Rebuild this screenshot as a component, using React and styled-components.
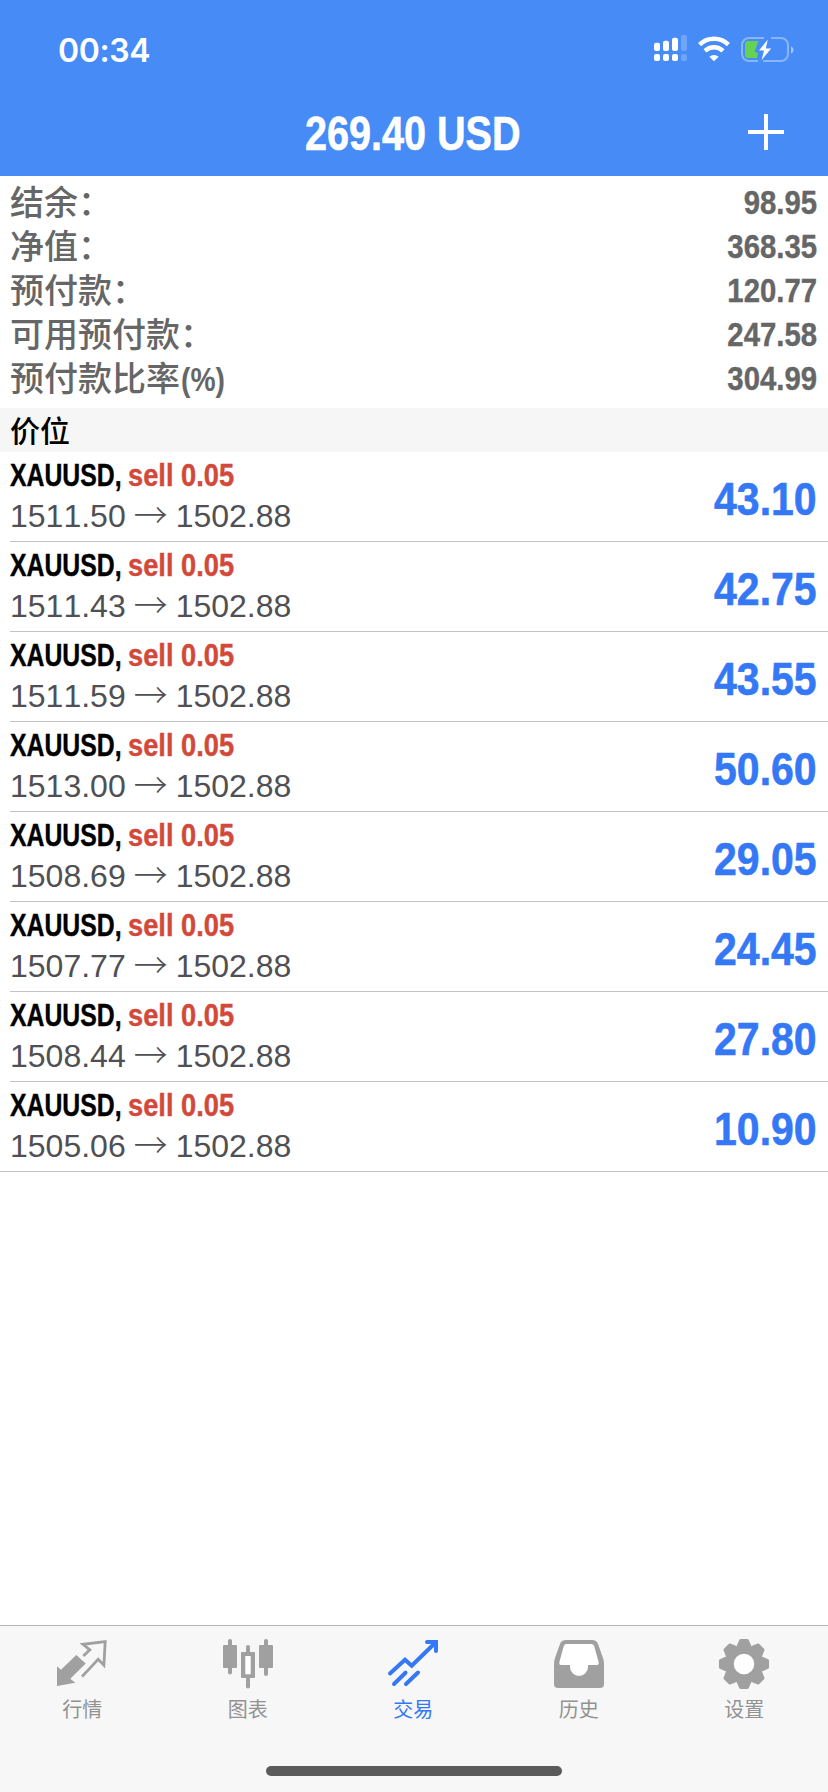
import React from "react";
import styled, { createGlobalStyle } from "styled-components";

const GlobalStyle = createGlobalStyle`
  * {
    box-sizing: border-box;
  }

  body {
    margin: 0;
    background-color: #fff;
    font-family: "Liberation Sans", "Noto Sans CJK SC", sans-serif;
    font-kerning: none;
  }

  svg {
    display: block;
    overflow: visible;
  }
`;

const Screen = styled.div`
  display: flex;
  flex-direction: column;
  width: 828px;
  height: 1792px;
  overflow: hidden;
  background-color: #fff;
`;

const Header = styled.header`
  height: 176px;
  background-color: #478bf6;
  color: #fff;
`;

const StatusBar = styled.div`
  display: flex;
  justify-content: space-between;
  height: 88px;
  padding: 30px 34px 0 58px;
`;

const Clock = styled.div`
  font-family: "Inter", sans-serif;
  font-size: 32px;
  font-weight: 600;
  line-height: 41px;
  letter-spacing: -0.4px;
`;

const StatusIcons = styled.div`
  display: flex;
  gap: 11px;
  padding-top: 5px;
`;

const NavBar = styled.div`
  display: grid;
  grid-template-columns: 1fr auto 1fr;
  align-items: center;
  height: 88px;
  padding: 2px 44px 0 41px;
`;

const Title = styled.h1`
  grid-column: 2;
  margin: 0;
  font-size: 48px;
  line-height: 88px;
  transform: scaleX(0.825);
  -webkit-text-stroke: 0.6px;
`;

const AddButton = styled.button`
  justify-self: end;
  margin-top: -4px;
  padding: 0;
  border: none;
  background: none;
  color: #fff;
`;

const Summary = styled.section`
  height: 232px;
  padding: 4px 11px 0 10px;
  color: #666;
  font-size: 34px;
`;

const SummaryRow = styled.div`
  display: flex;
  justify-content: space-between;
  height: 44px;
  line-height: 44px;
`;

const SummaryLabel = styled.div`
  font-weight: 500;
  line-height: 46px;
  white-space: nowrap;
`;

const Unit = styled.span`
  display: inline-block;
  margin-left: 1px;
  font-weight: bold;
  transform: scaleX(0.83);
  transform-origin: left;
`;

const SummaryValue = styled.div`
  font-weight: bold;
  transform: scaleX(0.862);
  transform-origin: right;
  -webkit-text-stroke: 0.4px;
`;

const SectionTitle = styled.div`
  height: 44px;
  padding-left: 10px;
  background-color: #f6f6f6;
  color: #000;
  font-size: 30px;
  font-weight: 500;
  line-height: 48px;
`;

const PositionList = styled.div`
  flex: 1;
`;

const Position = styled.div`
  display: flex;
  justify-content: space-between;
  height: 90px;
  margin-left: 10px;
  padding: 3px 11px 0 0;
  border-bottom: 1px solid #c3c3c5;

  &:last-child {
    margin-left: 0;
    padding-left: 10px;
  }
`;

const Deal = styled.div`
  display: flex;
  height: 40px;
  font-size: 31px;
  font-weight: bold;
  line-height: 42px;
  white-space: nowrap;
  -webkit-text-stroke: 0.4px;
`;

const Symbol = styled.span`
  width: 118px;
  color: #000;
  transform: scaleX(0.8);
  transform-origin: left;
`;

const Side = styled.span`
  color: #d2493a;
  transform: scaleX(0.88);
  transform-origin: left;
`;

const Prices = styled.div`
  display: flex;
  height: 42px;
  color: #505054;
  font-size: 32px;
  line-height: 42px;
`;

const Arrow = styled.span`
  width: 50px;
  font-family: "Noto Sans CJK SC", sans-serif;
  font-size: 34px;
  font-weight: 300;
  line-height: 37px;
  text-align: center;
`;

const Profit = styled.div`
  color: #3478f6;
  font-size: 47px;
  font-weight: bold;
  line-height: 87px;
  transform: scaleX(0.872);
  transform-origin: right;
  -webkit-text-stroke: 0.6px;
`;

const TabBar = styled.nav`
  height: 167px;
  border-top: 1px solid #b4b4b4;
  background-color: #f7f7f7;
`;

const Tabs = styled.div`
  display: flex;
  height: 140px;
`;

const Tab = styled.div`
  display: flex;
  flex-direction: column;
  align-items: center;
  width: 165.5px;
  padding: 13px 1px 0 0;
  color: ${(props) => (props.$active ? "#3478f6" : "#a0a0a0")};
`;

const TabLabel = styled.div`
  margin-top: 6px;
  color: ${(props) => (props.$active ? "#3478f6" : "#929292")};
  font-size: 20px;
  line-height: 30px;
`;

const HomeIndicator = styled.div`
  width: 296px;
  height: 10px;
  margin: 0 auto;
  border-radius: 5px;
  background-color: #5b5b5b;
`;

const SignalIcon = () => (
  <svg width="33" height="27" viewBox="0 0 33 27" fill="#fff">
    <rect x="0" y="7.7" width="6" height="8.3" rx="2" />
    <rect x="9" y="5.7" width="6" height="10.3" rx="2" />
    <rect x="18" y="2.7" width="6" height="13.3" rx="2" />
    <rect x="27" y="0" width="6" height="16" rx="2" opacity="0.22" />
    <rect x="0" y="19" width="6" height="7" rx="2" />
    <rect x="9" y="19" width="6" height="7" rx="2" />
    <rect x="18" y="19" width="6" height="7" rx="2" />
    <rect x="27" y="19" width="6" height="7" rx="2" opacity="0.22" />
  </svg>
);

const WifiIcon = () => (
  <svg width="32" height="27" viewBox="0 0 32 27">
    <g fill="none" stroke="#fff" strokeWidth="4.4">
      <path d="M1.6 9.6a20.6 20.6 0 0 1 28.8 0" />
      <path d="M7 15.8a13 13 0 0 1 18 0" />
    </g>
    <path d="M16 26.3l-4.6-4.5a6.6 6.6 0 0 1 9.2 0z" fill="#fff" />
  </svg>
);

const BatteryIcon = () => (
  <svg width="53" height="27" viewBox="0 0 53 27">
    <path
      d="M17 26H8a7 7 0 0 1-7-7V10a7 7 0 0 1 7-7h15M30 3h10a7 7 0 0 1 7 7v9a7 7 0 0 1-7 7H22"
      fill="none"
      stroke="#fff"
      strokeOpacity="0.36"
      strokeWidth="2"
    />
    <path d="M50 11.4c3.4 1.2 3.4 5.8 0 7z" fill="#fff" fillOpacity="0.5" />
    <path
      d="M7 6h10.5L14 15.5c-.4 1.3.2 2 1.5 2H17L16 23H7a3 3 0 0 1-3-3V9a3 3 0 0 1 3-3z"
      fill="#63d255"
    />
    <path d="M26.8 4.5L18 15.5h5L20.6 25l9.6-11.5h-5.4z" fill="#fff" />
  </svg>
);

const PlusIcon = () => (
  <svg width="36" height="36" viewBox="0 0 36 36">
    <path d="M18 0v36M0 18h36" stroke="#fff" strokeWidth="4" />
  </svg>
);

const QuotesIcon = () => (
  <svg width="50" height="50" viewBox="0 0 50 50">
    <path
      d="M0 27.3L4 30.8 19.3 16l9.4 8.5L13.300 39.700l5 4L0 47z"
      fill="currentColor"
    />
    <path
      d="M26.3 17l6.5-6.2L26 5.3l22.2-2.6-1.3 23.5-5.7-6L25 37.6"
      fill="none"
      stroke="currentColor"
      strokeWidth="2.8"
    />
  </svg>
);

const ChartIcon = () => (
  <svg width="50" height="50" viewBox="0 0 50 50" fill="currentColor">
    <rect x="0" y="6" width="14" height="23" rx="1" />
    <rect x="5" y="0" width="4" height="35.5" rx="2" />
    <rect x="36" y="6" width="14" height="23" rx="1" />
    <rect x="41" y="0" width="4" height="37" rx="2" />
    <rect x="23" y="6" width="4" height="10" rx="2" />
    <rect x="23" y="38" width="4" height="11.5" rx="2" />
    <rect x="18" y="13" width="14" height="26" rx="1" />
    <rect x="22.3" y="17" width="5.4" height="18.3" fill="#fff" />
  </svg>
);

const TradeIcon = () => (
  <svg
    width="50"
    height="50"
    viewBox="0 0 50 50"
    fill="none"
    stroke="currentColor"
    strokeWidth="4"
    strokeLinecap="round"
  >
    <path d="M2 34.5l15-13.7 6.7 6L46 5" />
    <path d="M39 3h9v9" />
    <path d="M6 45l11.5-11.3M18 45l12-11.5" />
  </svg>
);

const HistoryIcon = () => (
  <svg width="50" height="50" viewBox="0 0 50 50">
    <path
      fill="currentColor"
      d="M12 1h26q4.5 0 6 4l5 14q1 3 1 6v20q0 4-4 4H4q-4 0-4-4V25q0-3 1-6L6 5q1.5-4 6-4z"
    />
    <path
      fill="#fff"
      d="M12.5 5q-2 0-2.6 1.8L5.5 22.5Q4.8 26 7 26h9v2a9 9 0 0 0 18 0v-2h9q2.200 0 1.500-3.500L40.100 6.800Q39.500 5 37.500 5z"
    />
  </svg>
);

const SettingsIcon = () => (
  <svg width="50" height="50" viewBox="0 0 50 50">
    <g transform="translate(25 25)" stroke="currentColor">
      <circle r="14.8" fill="#fff" strokeWidth="9" />
      {[0, 45, 90, 135, 180, 225, 270, 315].map((angle) => (
        <path
          key={angle}
          d="M-5.8 -18L-3.4 -23.5H3.4L5.8 -18z"
          fill="currentColor"
          strokeWidth="3"
          strokeLinejoin="round"
          transform={`rotate(${angle})`}
        />
      ))}
    </g>
  </svg>
);

const summary = [
  { label: "结余：", value: "98.95" },
  { label: "净值：", value: "368.35" },
  { label: "预付款：", value: "120.77" },
  { label: "可用预付款：", value: "247.58" },
  { label: "预付款比率", unit: "(%)", value: "304.99" },
];

const positions = [
  { open: "1511.50", profit: "43.10" },
  { open: "1511.43", profit: "42.75" },
  { open: "1511.59", profit: "43.55" },
  { open: "1513.00", profit: "50.60" },
  { open: "1508.69", profit: "29.05" },
  { open: "1507.77", profit: "24.45" },
  { open: "1508.44", profit: "27.80" },
  { open: "1505.06", profit: "10.90" },
];

const tabs = [
  { label: "行情", icon: <QuotesIcon /> },
  { label: "图表", icon: <ChartIcon /> },
  { label: "交易", icon: <TradeIcon />, active: true },
  { label: "历史", icon: <HistoryIcon /> },
  { label: "设置", icon: <SettingsIcon /> },
];

const App = () => {
  return (
    <Screen>
      <GlobalStyle />
      <Header>
        <StatusBar>
          <Clock>00:34</Clock>
          <StatusIcons>
            <SignalIcon />
            <WifiIcon />
            <BatteryIcon />
          </StatusIcons>
        </StatusBar>
        <NavBar>
          <Title>269.40 USD</Title>
          <AddButton>
            <PlusIcon />
          </AddButton>
        </NavBar>
      </Header>
      <Summary>
        {summary.map((item) => (
          <SummaryRow key={item.label}>
            <SummaryLabel>
              {item.label}
              {item.unit && <Unit>{item.unit}</Unit>}
            </SummaryLabel>
            <SummaryValue>{item.value}</SummaryValue>
          </SummaryRow>
        ))}
      </Summary>
      <SectionTitle>价位</SectionTitle>
      <PositionList>
        {positions.map((item) => (
          <Position key={item.open}>
            <div>
              <Deal>
                <Symbol>XAUUSD,</Symbol>
                <Side>sell 0.05</Side>
              </Deal>
              <Prices>
                {item.open}
                <Arrow>→</Arrow>
                1502.88
              </Prices>
            </div>
            <Profit>{item.profit}</Profit>
          </Position>
        ))}
      </PositionList>
      <TabBar>
        <Tabs>
          {tabs.map((tab) => (
            <Tab key={tab.label} $active={tab.active}>
              {tab.icon}
              <TabLabel $active={tab.active}>{tab.label}</TabLabel>
            </Tab>
          ))}
        </Tabs>
        <HomeIndicator />
      </TabBar>
    </Screen>
  );
};

export default App;
